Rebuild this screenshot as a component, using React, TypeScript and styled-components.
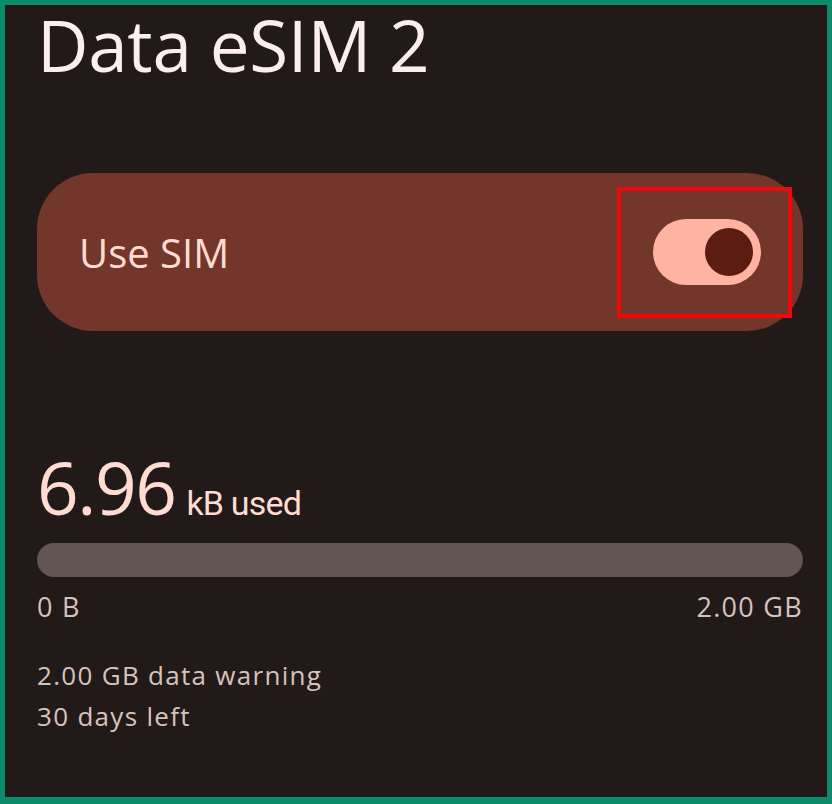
import React from "react";
import styled, { createGlobalStyle } from "styled-components";

const Global = createGlobalStyle`
  html, body {
    margin: 0;
    padding: 0;
    background: #0b8a6c;
  }
  body {
    font-family: "Open Sans", "Noto Sans", sans-serif;
  }
`;

const Frame = styled.div`
  box-sizing: border-box;
  width: 832px;
  height: 804px;
  padding: 5px 5px 7px 5px;
  background: #0b8a6c;
`;

const Screen = styled.div`
  box-sizing: border-box;
  height: 100%;
  background: #211a19;
  padding: 0 24px 0 32px;
  display: flex;
  flex-direction: column;
`;

const Title = styled.h1`
  margin: -4px 0 0 0;
  font-size: 71px;
  font-weight: 400;
  line-height: 88px;
  color: #fbeeec;
  letter-spacing: -0.3px;
  white-space: nowrap;
`;

const Card = styled.div`
  margin-top: 84px;
  height: 158px;
  border-radius: 56px;
  background: #73362b;
  display: flex;
  align-items: center;
  justify-content: space-between;
  padding: 0 40px 0 42px;
  box-sizing: border-box;
`;

const CardLabel = styled.span`
  font-size: 40px;
  color: #ffdbd1;
`;

const Highlight = styled.div`
  box-sizing: border-box;
  width: 175px;
  height: 131px;
  margin-right: -29px;
  padding-left: 5px;
  border: 4px solid #ee0a0a;
  display: flex;
  align-items: center;
  justify-content: center;
`;

const Switch = styled.div<{ $on: boolean }>`
  width: 108px;
  height: 66px;
  border-radius: 33px;
  background: ${(p) => (p.$on ? "#ffb4a3" : "#52433f")};
  display: flex;
  align-items: center;
  justify-content: ${(p) => (p.$on ? "flex-end" : "flex-start")};
  padding: 0 8px;
  box-sizing: border-box;
`;

const Knob = styled.div`
  width: 48px;
  height: 48px;
  border-radius: 50%;
  background: #5c1c11;
`;

const Usage = styled.div`
  margin-top: 116px;
  display: flex;
  align-items: baseline;
  gap: 11px;
  color: #ffdbd1;
`;

const Amount = styled.span`
  font-size: 73px;
  line-height: 80px;
  letter-spacing: -1.5px;
`;

const Unit = styled.span`
  font-family: Roboto, sans-serif;
  font-size: 34px;
  line-height: 40px;
  letter-spacing: -0.8px;
`;

const Track = styled.div`
  margin-top: 16px;
  height: 34px;
  border-radius: 17px;
  background: #625553;
  overflow: hidden;
`;

const Fill = styled.div`
  height: 100%;
  background: #ffb4a3;
`;

const Scale = styled.div`
  margin-top: 12px;
  display: flex;
  justify-content: space-between;
  font-size: 27px;
  line-height: 36px;
  letter-spacing: 1.3px;
  color: #d8c2be;
`;

const Notes = styled.div`
  margin-top: 30px;
  display: flex;
  flex-direction: column;
  font-size: 26px;
  line-height: 41px;
  letter-spacing: 1.3px;
  color: #d8c2be;
`;

const used = 6.96 / (2 * 1024 * 1024);

export default function App() {
  return (
    <Frame>
      <Global />
      <Screen>
        <Title>Data eSIM 2</Title>
        <Card>
          <CardLabel>Use SIM</CardLabel>
          <Highlight>
            <Switch $on>
              <Knob />
            </Switch>
          </Highlight>
        </Card>
        <Usage>
          <Amount>6.96</Amount>
          <Unit>kB used</Unit>
        </Usage>
        <Track>
          <Fill style={{ width: `${used * 100}%` }} />
        </Track>
        <Scale>
          <span>0 B</span>
          <span>2.00 GB</span>
        </Scale>
        <Notes>
          <span>2.00 GB data warning</span>
          <span>30 days left</span>
        </Notes>
      </Screen>
    </Frame>
  );
}
